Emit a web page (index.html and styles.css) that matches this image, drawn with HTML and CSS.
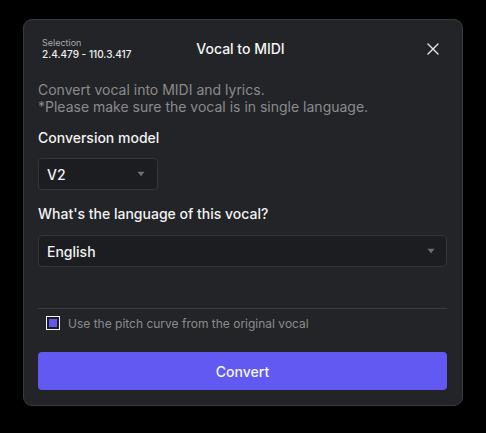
FILE: index.html
```html
<!DOCTYPE html>
<html lang="en">
<head>
<meta charset="utf-8">
<title>Vocal to MIDI</title>
<link rel="stylesheet" href="styles.css">
</head>
<body>
<div class="dialog">
  <div class="header">
    <div class="selection">
      <div class="sel-label">Selection</div>
      <div class="sel-range">2.4.479 - 110.3.417</div>
    </div>
    <div class="title">Vocal to MIDI</div>
    <div class="close-wrap">
      <svg class="close" width="12" height="12" viewBox="0 0 12 12"><path d="M1 1L11 11M11 1L1 11" stroke="#e6e6e6" stroke-width="1.4" stroke-linecap="round"/></svg>
    </div>
  </div>
  <div class="body">
    <p class="desc">Convert vocal into MIDI and lyrics.<br>*Please make sure the vocal is in single language.</p>
    <div class="label">Conversion model</div>
    <div class="select select-small">
      <span>V2</span>
      <svg class="caret" width="8" height="6" viewBox="0 0 8 6"><path d="M0.5 0.8H7.5L4 5.2Z" fill="#6f7074"/></svg>
    </div>
    <div class="label label-2">What's the language of this vocal?</div>
    <div class="select select-wide">
      <span>English</span>
      <svg class="caret" width="8" height="6" viewBox="0 0 8 6"><path d="M0.5 0.8H7.5L4 5.2Z" fill="#6f7074"/></svg>
    </div>
    <div class="divider"></div>
    <label class="check-row">
      <span class="checkbox"><span class="check-fill"></span></span>
      <span class="check-text">Use the pitch curve from the original vocal</span>
    </label>
    <button class="convert">Convert</button>
  </div>
</div>
</body>
</html>
```
FILE: styles.css
```css
html, body {
  margin: 0;
  padding: 0;
  background: #000;
}
body {
  font-family: "Inter", "Liberation Sans", sans-serif;
  color: #f2f2f2;
  width: 486px;
  height: 433px;
  overflow: hidden;
}
.dialog {
  box-sizing: border-box;
  margin: 19px 0 0 23px;
  width: 440px;
  height: 387px;
  background: #232427;
  border: 1px solid #3a3b3f;
  border-radius: 9px;
}
.header {
  display: grid;
  grid-template-columns: 1fr auto 1fr;
  align-items: center;
  padding: 17px 23px 0 18px;
}
.selection {
  display: flex;
  flex-direction: column;
}
.sel-label {
  font-size: 9px;
  line-height: 11px;
  color: #a8a8aa;
}
.sel-range {
  font-size: 10px;
  line-height: 12px;
  font-weight: 500;
  color: #f0f0f0;
}
.title {
  font-size: 14px;
  font-weight: 500;
  color: #f4f4f4;
}
.close-wrap {
  display: flex;
  justify-content: flex-end;
}
.close {
  display: block;
}
.body {
  padding: 0 15px 0 14px;
}
.desc {
  margin: 21px 0 0 0;
  font-size: 14px;
  line-height: 17px;
  color: #8b8b8e;
}
.label {
  margin-top: 14px;
  font-size: 14px;
  line-height: 17px;
  font-weight: 500;
  color: #f2f2f2;
}
.label-2 {
  margin-top: 15px;
}
.select {
  box-sizing: border-box;
  display: flex;
  align-items: center;
  justify-content: space-between;
  height: 32px;
  margin-top: 12px;
  padding: 0 12px 0 8px;
  background: #1c1d20;
  border: 1px solid #35363a;
  border-radius: 4px;
  font-size: 14px;
  font-weight: 500;
  color: #f2f2f2;
}
.select-small {
  width: 120px;
}
.select-wide {
  width: 100%;
  margin-top: 13px;
  padding-right: 11px;
}
.caret {
  display: block;
}
.divider {
  height: 1px;
  background: #3a3b3f;
  margin-top: 41px;
}
.check-row {
  display: flex;
  align-items: center;
  gap: 8px;
  margin-top: 7px;
  padding-left: 8px;
  height: 14px;
}
.checkbox {
  box-sizing: border-box;
  width: 14px;
  height: 14px;
  border: 1px solid #f4f4f4;
  padding: 2px;
  background: #1c1d20;
  display: flex;
}
.check-fill {
  flex: 1;
  background: #6358f0;
}
.check-text {
  font-size: 12px;
  color: #8b8b8e;
}
.convert {
  display: block;
  margin-top: 22px;
  width: 100%;
  height: 38px;
  border: none;
  border-radius: 4px;
  background: #6259f3;
  color: #f6f6ff;
  font-family: "Inter", "Liberation Sans", sans-serif;
  font-size: 14px;
  font-weight: 500;
}
```
